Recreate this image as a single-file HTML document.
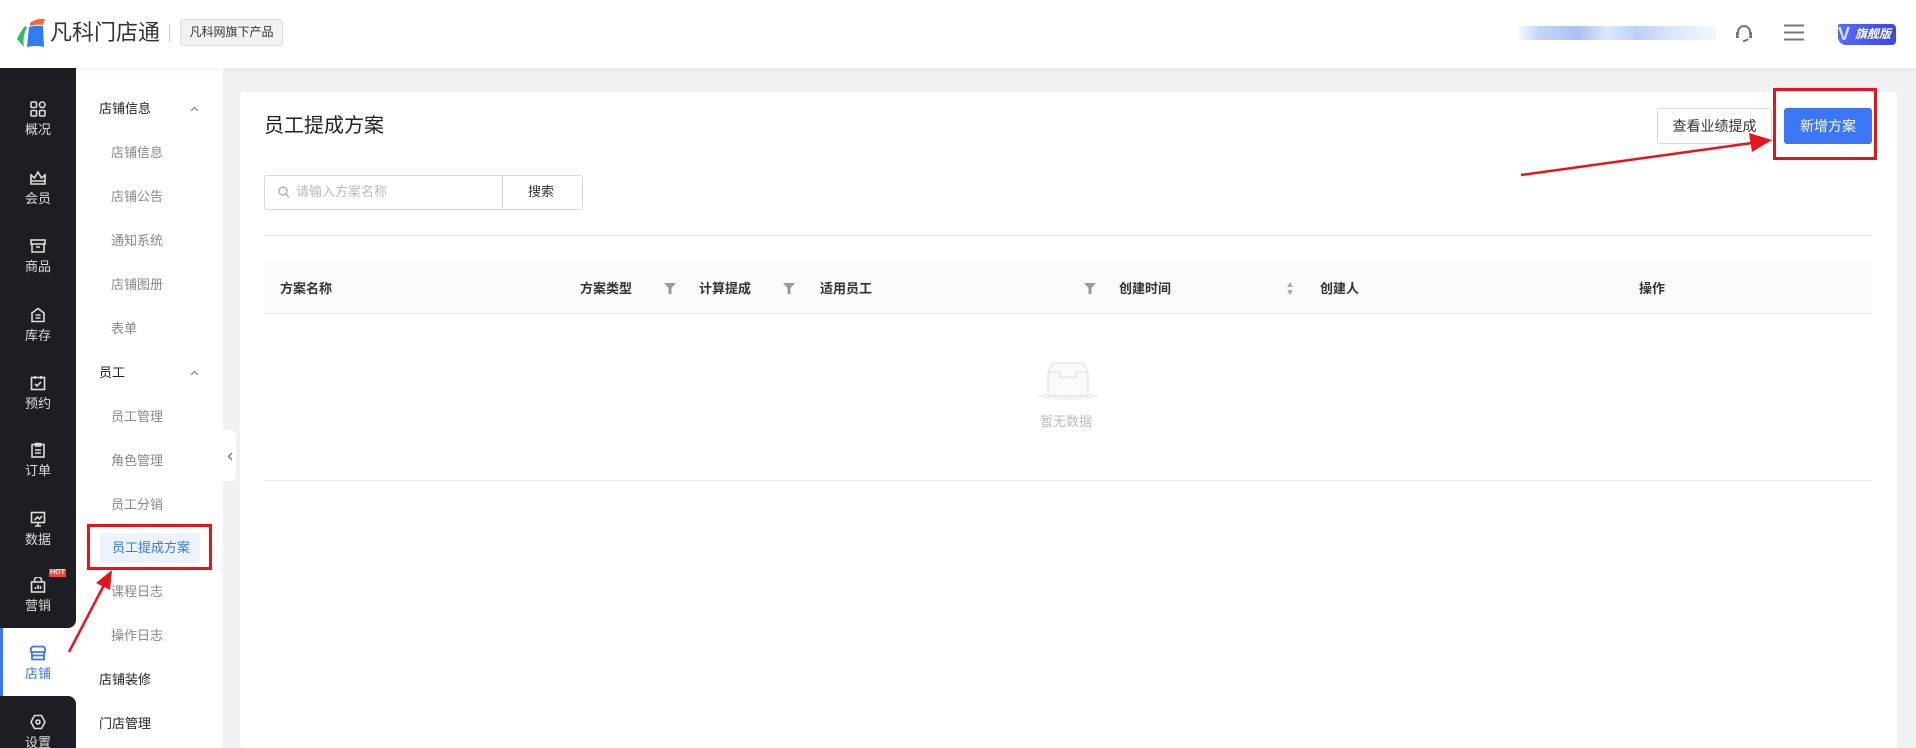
<!DOCTYPE html>
<html><head><meta charset="utf-8"><style>
*{margin:0;padding:0;box-sizing:border-box}
html,body{width:1916px;height:748px;overflow:hidden}
body{background:#f0f1f3;font-family:"Liberation Sans","Noto Sans CJK SC",sans-serif;position:relative;color:#333}
.abs{position:absolute}
.hdr{left:0;top:0;width:1916px;height:68px;background:#fff;box-shadow:0 2px 6px rgba(0,0,0,.05);z-index:2}
.side{left:0;top:68px;width:76px;height:680px;background:#fff}
.dk{position:absolute;left:0;width:76px;background:#1d1e23}
.ni{position:absolute;left:0;width:76px;text-align:center;font-size:13px;color:#ddd;line-height:16px}
.ni svg{display:block;margin:0 auto 5px}
.sub{left:76px;top:68px;width:147px;height:680px;background:#fff}
.si{position:absolute;font-size:13px;line-height:16px;color:#888}
.sh{color:#222}
.card{left:240px;top:92px;width:1657px;height:656px;background:#fff;border-radius:4px}
.th{position:absolute;top:281px;font-size:13px;color:#333;font-weight:bold;line-height:16px}
.flt{position:absolute;top:283px}
</style></head><body>
<div class="abs hdr">
  <svg class="abs" style="left:16px;top:17px" width="30" height="32" viewBox="0 0 30 32">
    <path d="M14 6 Q20 1 29 2 L27 8 Q20 7 14 9Z" fill="#f36b2c"/>
    <path d="M13 10 Q20 8 27 9 L28 30 Q20 28 11 30Z" fill="#2e7ef2"/>
    <path d="M9 9 Q3 17 1 22 L8 30 Q6 20 11 10Z" fill="#2fbf5a"/>
  </svg>
  <div class="abs" style="left:50px;top:20px;font-size:22px;line-height:26px;color:#333">凡科门店通</div>
  <div class="abs" style="left:169px;top:25px;width:1px;height:17px;background:#ccc"></div>
  <div class="abs" style="left:180px;top:19px;width:103px;height:27px;background:#f2f2f2;border:1px solid #ddd;border-radius:3px;font-size:12px;line-height:25px;text-align:center;color:#333">凡科网旗下产品</div>
  <div class="abs" style="left:1519px;top:26px;width:197px;height:14px;background:linear-gradient(90deg,#f4f6fd,#c5d4fa 10%,#a9c0f7 30%,#dfe7fc 45%,#bcd0f9 60%,#e0e8fc 80%,#f4f6fd)"></div>
  <svg class="abs" style="left:1734px;top:23px" width="20" height="20" viewBox="0 0 20 20"><path d="M4 12 V9 a6 6 0 0 1 12 0 V12 M4 10 h-1 v4 h2 M16 10 h1 v4 h-2 M14 16 q-2 2 -5 2" fill="none" stroke="#777" stroke-width="2"/></svg>
  <svg class="abs" style="left:1784px;top:24px" width="20" height="17" viewBox="0 0 20 17"><path d="M0 1.5h20M0 8.5h20M0 15.5h20" stroke="#777" stroke-width="2"/></svg>
  <div class="abs" style="left:1838px;top:24px;width:58px;height:21px;background:linear-gradient(90deg,#5a6cf5,#3a48e0);border-radius:2px 4px 4px 8px;color:#fff;font-size:12px;line-height:21px;font-style:italic;font-weight:bold;text-align:right;padding-right:5px">旗舰版</div>
  <div class="abs" style="left:1838px;top:24px;font-size:18px;font-weight:bold;color:#cfe0ff;line-height:21px">V</div>
</div>

<div class="abs side">
  <div class="dk" style="top:0;height:560px;border-bottom-right-radius:8px"></div>
  <div class="dk" style="top:628px;height:60px;border-top-right-radius:8px"></div>
  <div class="abs" style="left:0;top:560px;width:3px;height:68px;background:#3a76f6"></div>
  <div class="ni" style="top:33px"><svg width="16" height="16" viewBox="0 0 16 16" fill="none" stroke="#ddd" stroke-width="1.6"><rect x="1" y="1" width="5.5" height="5.5" rx="1"/><rect x="9.5" y="9.5" width="5.5" height="5.5" rx="1"/><rect x="1" y="9.5" width="5.5" height="5.5" rx="1"/><circle cx="12.2" cy="3.8" r="2.8"/></svg>概况</div>
  <div class="ni" style="top:102px"><svg width="16" height="16" viewBox="0 0 16 16" fill="none" stroke="#ddd" stroke-width="1.6"><path d="M1 5 L4.5 8 L8 2 L11.5 8 L15 5 V14 H1Z M1 11h14"/></svg>会员</div>
  <div class="ni" style="top:170px"><svg width="16" height="16" viewBox="0 0 16 16" fill="none" stroke="#ddd" stroke-width="1.6"><rect x="1" y="2" width="14" height="4"/><path d="M2 6 V14 H14 V6 M6 9h4"/></svg>商品</div>
  <div class="ni" style="top:239px"><svg width="16" height="16" viewBox="0 0 16 16" fill="none" stroke="#ddd" stroke-width="1.6"><path d="M2 6 L8 1.5 L14 6 V14.5 H2Z M5.5 8h5M5.5 11h5"/></svg>库存</div>
  <div class="ni" style="top:307px"><svg width="16" height="16" viewBox="0 0 16 16" fill="none" stroke="#ddd" stroke-width="1.6"><rect x="1.5" y="2.5" width="13" height="12"/><path d="M5 1v3M11 1v3M5 9l2 2 4-4"/></svg>预约</div>
  <div class="ni" style="top:374px"><svg width="16" height="16" viewBox="0 0 16 16" fill="none" stroke="#ddd" stroke-width="1.6"><rect x="2" y="2.5" width="12" height="12.5"/><path d="M5.5 1.5h5v2.5h-5z M5 8h6M5 11h6"/></svg>订单</div>
  <div class="ni" style="top:443px"><svg width="16" height="16" viewBox="0 0 16 16" fill="none" stroke="#ddd" stroke-width="1.6"><rect x="1.5" y="1.5" width="13" height="10"/><path d="M5 15h6M8 11.5V15M4.5 9l3-3 2 2 2.5-3"/></svg>数据</div>
  <div class="abs" style="left:49px;top:501px;width:17px;height:8px;background:#f0453a;color:#fff;font-size:7px;line-height:8px;text-align:center;font-weight:bold">HOT</div>
  <div class="ni" style="top:509px"><svg width="16" height="16" viewBox="0 0 16 16" fill="none" stroke="#ddd" stroke-width="1.6"><path d="M4.5 5V3a3.5 3 0 0 1 7 0V5"/><rect x="1.5" y="5" width="13" height="10"/><path d="M5.5 12v-2M8 12V8M10.5 12v-3"/></svg>营销</div>
  <div class="ni" style="top:577px;color:#3a76f6"><svg width="18" height="16" viewBox="0 0 18 16" fill="none" stroke="#3a76f6" stroke-width="1.8"><path d="M2 7 Q1 1.5 5 1.5 H13 Q17 1.5 16 7 Z M3 7 V14.5 H15 V7 M3 10.5h12"/></svg>店铺</div>
  <div class="ni" style="top:646px"><svg width="16" height="16" viewBox="0 0 16 16" fill="none" stroke="#ddd" stroke-width="1.6"><path d="M4.5 1.5h7L15 8l-3.5 6.5h-7L1 8z"/><circle cx="8" cy="8" r="2"/></svg>设置</div>
</div>

<div class="abs sub">
  <div class="si sh" style="left:23px;top:33px">店铺信息</div>
  <svg class="abs" style="left:114px;top:38px" width="9" height="6" viewBox="0 0 9 6"><path d="M1 5 L4.5 1.5 L8 5" fill="none" stroke="#888" stroke-width="1.2"/></svg>
  <div class="si" style="left:35px;top:77px">店铺信息</div>
  <div class="si" style="left:35px;top:121px">店铺公告</div>
  <div class="si" style="left:35px;top:165px">通知系统</div>
  <div class="si" style="left:35px;top:209px">店铺图册</div>
  <div class="si" style="left:35px;top:253px">表单</div>
  <div class="si sh" style="left:23px;top:297px">员工</div>
  <svg class="abs" style="left:114px;top:302px" width="9" height="6" viewBox="0 0 9 6"><path d="M1 5 L4.5 1.5 L8 5" fill="none" stroke="#888" stroke-width="1.2"/></svg>
  <div class="si" style="left:35px;top:341px">员工管理</div>
  <div class="si" style="left:35px;top:385px">角色管理</div>
  <div class="si" style="left:35px;top:429px">员工分销</div>
  <div class="abs" style="left:24px;top:465px;width:100px;height:30px;background:#ecf2fe;border-radius:4px"></div>
  <div class="si" style="left:36px;top:472px;color:#3a76f6">员工提成方案</div>
  <div class="si" style="left:35px;top:516px">课程日志</div>
  <div class="si" style="left:35px;top:560px">操作日志</div>
  <div class="si sh" style="left:23px;top:604px">店铺装修</div>
  <div class="si sh" style="left:23px;top:648px">门店管理</div>
</div>
<div class="abs" style="left:223px;top:430px;width:13px;height:51px;background:#fff;border-radius:0 6px 6px 0"></div>
<svg class="abs" style="left:227px;top:452px" width="6" height="9" viewBox="0 0 6 9"><path d="M5 1 L1.5 4.5 L5 8" fill="none" stroke="#666" stroke-width="1.2"/></svg>

<div class="abs card"></div>
<div class="abs" style="left:264px;top:113px;font-size:20px;line-height:26px;color:#222">员工提成方案</div>
<div class="abs" style="left:1657px;top:108px;width:115px;height:36px;border:1px solid #d9d9d9;border-radius:3px;font-size:14px;line-height:34px;text-align:center;color:#333">查看业绩提成</div>
<div class="abs" style="left:1784px;top:108px;width:88px;height:36px;background:#3a76f6;border-radius:3px;font-size:14px;line-height:36px;text-align:center;color:#fff">新增方案</div>

<div class="abs" style="left:264px;top:175px;width:319px;height:35px;border:1px solid #d9d9d9;border-radius:3px"></div>
<div class="abs" style="left:502px;top:175px;width:1px;height:35px;background:#d9d9d9"></div>
<svg class="abs" style="left:278px;top:186px" width="12" height="13" viewBox="0 0 12 13"><circle cx="5" cy="5" r="4" fill="none" stroke="#aaa" stroke-width="1.3"/><path d="M8 8l3 3.5" stroke="#aaa" stroke-width="1.3"/></svg>
<div class="abs" style="left:296px;top:184px;font-size:13px;line-height:16px;color:#bbb">请输入方案名称</div>
<div class="abs" style="left:528px;top:184px;font-size:13px;line-height:16px;color:#333">搜索</div>
<div class="abs" style="left:264px;top:235px;width:1608px;height:1px;background:#e8e8e8"></div>

<div class="abs" style="left:264px;top:260px;width:1608px;height:54px;background:#fafafa;border-bottom:1px solid #e8e8e8"></div>
<div class="th" style="left:280px">方案名称</div>
<div class="th" style="left:580px">方案类型</div>
<div class="th" style="left:699px">计算提成</div>
<div class="th" style="left:820px">适用员工</div>
<svg class="flt" style="left:664px" width="12" height="11" viewBox="0 0 12 11"><path d="M0 0H12L7.5 5V11H4.5V5Z" fill="#999"/></svg>
<svg class="flt" style="left:783px" width="12" height="11" viewBox="0 0 12 11"><path d="M0 0H12L7.5 5V11H4.5V5Z" fill="#999"/></svg>
<svg class="flt" style="left:1084px" width="12" height="11" viewBox="0 0 12 11"><path d="M0 0H12L7.5 5V11H4.5V5Z" fill="#999"/></svg>
<div class="th" style="left:1119px">创建时间</div>
<div class="abs" style="left:1287px;top:282px;width:0;height:0;border-left:3.5px solid transparent;border-right:3.5px solid transparent;border-bottom:5px solid #aaa"></div>
<div class="abs" style="left:1287px;top:290px;width:0;height:0;border-left:3.5px solid transparent;border-right:3.5px solid transparent;border-top:5px solid #aaa"></div>
<div class="th" style="left:1320px">创建人</div>
<div class="th" style="left:1639px">操作</div>

<svg class="abs" style="left:1036px;top:360px" width="64" height="42" viewBox="0 0 64 42"><ellipse cx="32" cy="36" rx="31" ry="4" fill="#f3f3f3"/><path d="M12 12 L17 3 H47 L52 12 V36 H12Z" fill="#fafafa" stroke="#ddd"/><path d="M12 12 H24 V17 H40 V12 H52" fill="none" stroke="#ddd"/></svg>
<div class="abs" style="left:1040px;top:414px;font-size:13px;line-height:16px;color:#bbb">暂无数据</div>
<div class="abs" style="left:264px;top:480px;width:1608px;height:1px;background:#e8e8e8"></div>

<svg class="abs" style="left:0;top:0" width="1916" height="748">
  <rect x="1774.5" y="89.5" width="101" height="69" fill="none" stroke="#e8141b" stroke-width="3"/>
  <rect x="88.5" y="525.5" width="122" height="43" fill="none" stroke="#e8141b" stroke-width="3"/>
  <path d="M1521 175 L1752 143" stroke="#e8141b" stroke-width="2.5"/>
  <path d="M1772 140 L1749 133 L1752 152Z" fill="#e8141b"/>
  <path d="M69 652 L104 585" stroke="#e8141b" stroke-width="2.5"/>
  <path d="M112 570 L96 583 L110 590Z" fill="#e8141b"/>
</svg>
</body></html>
